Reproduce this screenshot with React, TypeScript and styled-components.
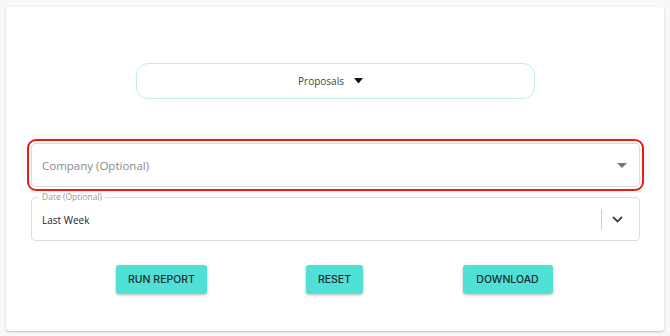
import React from 'react';
import styled, { createGlobalStyle } from 'styled-components';

const GlobalStyle = createGlobalStyle`
  html, body {
    margin: 0;
    padding: 0;
    background: #f8f8f8;
  }
  body {
    font-family: 'Open Sans', 'Liberation Sans', sans-serif;
  }
`;

const Page = styled.div`
  width: 670px;
  height: 336px;
  padding: 7px 6px 5px 6px;
  box-sizing: border-box;
`;

const Card = styled.div`
  height: 324px;
  box-sizing: border-box;
  background: #ffffff;
  border-radius: 3px;
  box-shadow: 0 1px 2px rgba(0, 0, 0, 0.22), 0 0 1px rgba(0, 0, 0, 0.06);
  padding: 56px 24px 0 25px;
  display: flex;
  flex-direction: column;
`;

const ReportPicker = styled.div`
  align-self: center;
  width: 399px;
  height: 36px;
  box-sizing: border-box;
  border: 1px solid #bdeeee;
  border-radius: 12px;
  display: flex;
  align-items: center;
  justify-content: center;
  gap: 10px;
  font-size: 10px;
  color: #444;
  padding-right: 10px;
`;

const Highlight = styled.div`
  margin: 40px -4px 0 -4px;
  padding: 2px;
  border: 2px solid #f4190f;
  border-radius: 9px;
`;

const SelectBox = styled.div`
  height: 44px;
  box-sizing: border-box;
  border: 1px solid #dcdcdc;
  border-radius: 4px;
  display: flex;
  align-items: center;
  padding: 0 12px 0 10px;
`;

const Placeholder = styled.span`
  flex: 1;
  font-size: 11.5px;
  color: #8a8a8a;
`;

const DateField = styled.div`
  margin-top: 6px;
  height: 44px;
  box-sizing: border-box;
  border: 1px solid #dcdcdc;
  border-radius: 4px;
  padding: 0 16px 0 10px;
  display: flex;
  align-items: center;
  position: relative;
`;

const Legend = styled.span`
  position: absolute;
  top: -7px;
  left: 7px;
  padding: 0 3px;
  background: #fff;
  font-size: 8.5px;
  color: #9a9a9a;
  line-height: 12px;
`;

const Value = styled.span`
  flex: 1;
  font-size: 10px;
  color: #222;
  padding-top: 1px;
`;

const Divider = styled.span`
  width: 1px;
  height: 21px;
  background: #cfcfcf;
  margin-right: 10px;
`;

const Actions = styled.div`
  margin-top: 24px;
  display: grid;
  grid-template-columns: repeat(3, 173px);
  justify-content: center;
  justify-items: center;
  padding-right: 2px;
`;

const Button = styled.button<{ $w: number }>`
  width: ${p => p.$w}px;
  height: 29px;
  border: none;
  border-radius: 3px;
  background: #50e0d6;
  color: #1d2b2b;
  font-family: 'Inter', 'Liberation Sans', sans-serif;
  font-size: 10.5px;
  font-weight: 500;
  box-shadow: 0 1px 3px rgba(0, 0, 0, 0.28);
  cursor: pointer;
`;

const App = () => (
  <Page>
    <GlobalStyle />
    <Card>
      <ReportPicker>
        <span>Proposals</span>
        <svg width="9" height="6" viewBox="0 0 9 6">
          <path d="M0 0 H9 L4.5 5.5 Z" fill="#111" />
        </svg>
      </ReportPicker>

      <Highlight>
        <SelectBox>
          <Placeholder>Company (Optional)</Placeholder>
          <svg width="10" height="5" viewBox="0 0 10 5">
            <path d="M0 0 H10 L5 5 Z" fill="#777" />
          </svg>
        </SelectBox>
      </Highlight>

      <DateField>
        <Legend>Date (Optional)</Legend>
        <Value>Last Week</Value>
        <Divider />
        <svg width="11" height="7" viewBox="0 0 11 7">
          <path d="M1 1 L5.5 5.5 L10 1" fill="none" stroke="#444" strokeWidth="1.8" />
        </svg>
      </DateField>

      <Actions>
        <Button $w={91}>RUN REPORT</Button>
        <Button $w={57}>RESET</Button>
        <Button $w={90}>DOWNLOAD</Button>
      </Actions>
    </Card>
  </Page>
);

export default App;
